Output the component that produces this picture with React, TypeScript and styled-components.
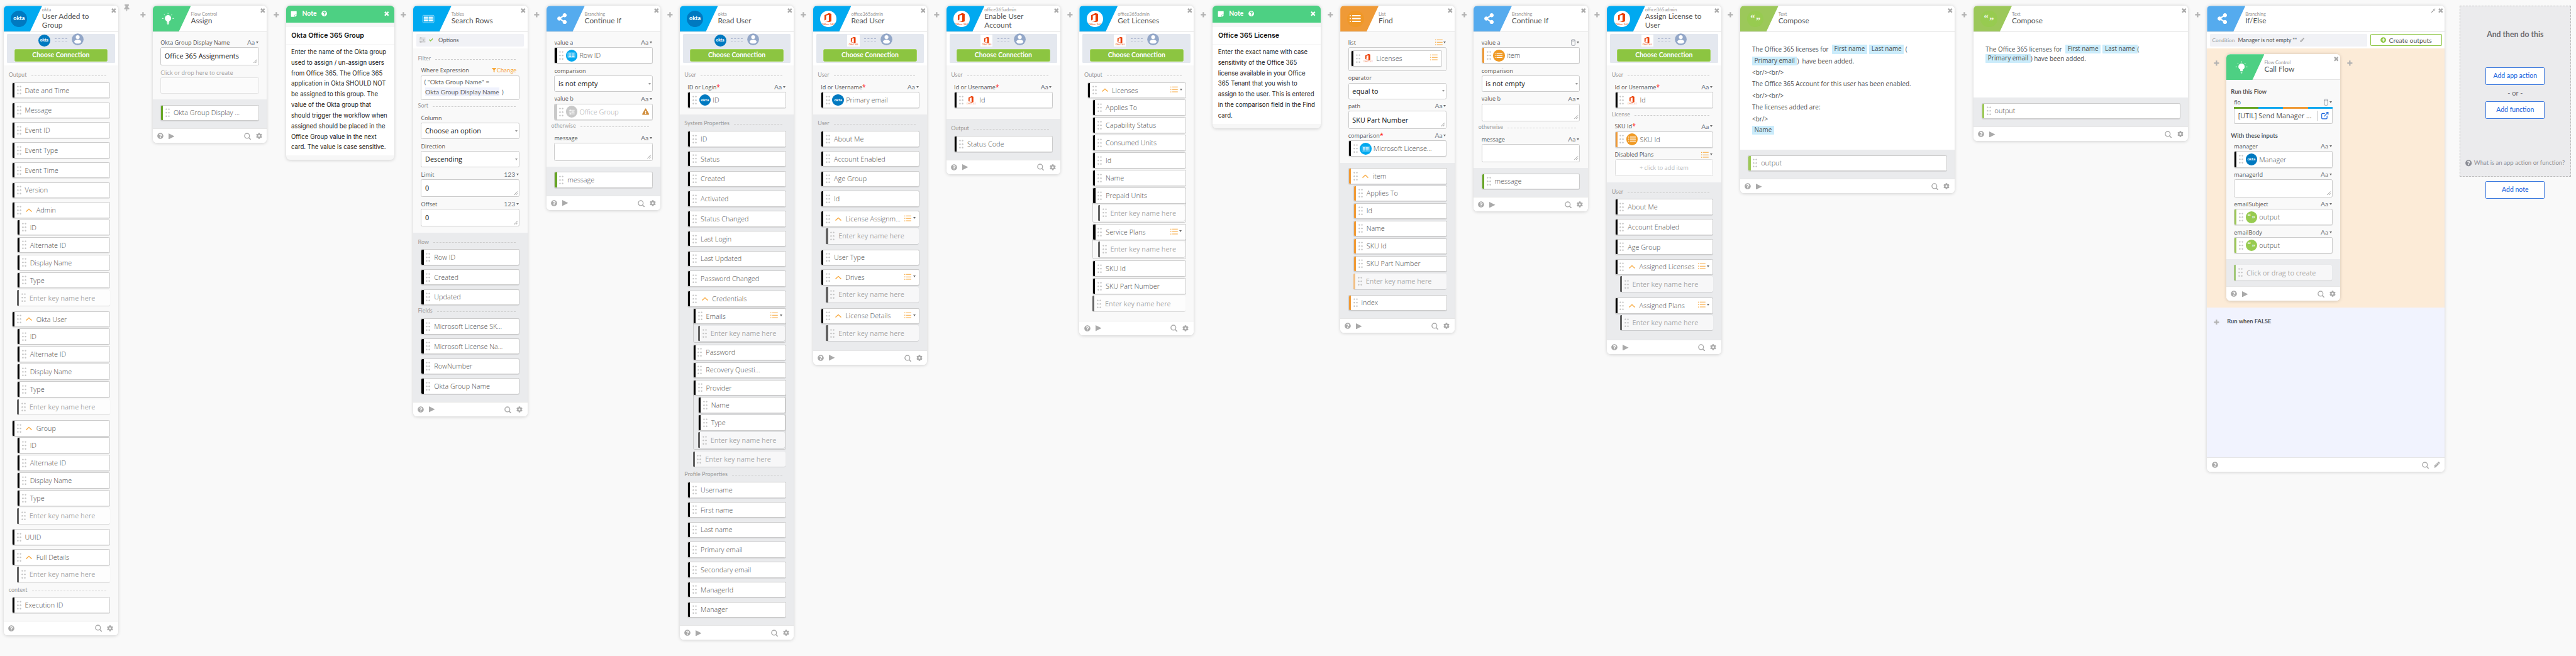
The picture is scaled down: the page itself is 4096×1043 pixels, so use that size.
import React from 'react';
import styled, { createGlobalStyle, css } from 'styled-components';
import {
  FaQuestionCircle,
  FaCog,
  FaPencilAlt,
  FaShareAlt,
  FaThumbtack,
  FaCheck,
  FaFilter,
  FaExclamationTriangle,
  FaPlusCircle,
  FaCompressAlt,
  FaStickyNote,
} from 'react-icons/fa';
import { FiExternalLink } from 'react-icons/fi';

const ui = `Lato, "Open Sans", sans-serif`;
const body = `"Open Sans", "Noto Sans", sans-serif`;

const colors = {
  page: '#f9f9f9',
  panel: '#eaebed',
  text: '#5a5a5a',
  label: '#555',
  faint: '#9a9a9a',
  icon: '#a9a9a9',
  line: '#cbcbcb',
  orange: '#f8a83c',
};

const Global = createGlobalStyle`
  *, *::before, *::after { box-sizing: border-box; }
  body { margin: 0; background: ${colors.page}; overflow: hidden; }
`;

/* ---------- board ---------- */

const Board = styled.main`
  zoom: 0.79673;
  width: 5141px;
  height: 1309px;
  overflow: hidden;
  display: flex;
  align-items: flex-start;
  padding: 11.8px 0 0 7.6px;
  background: ${colors.page};
  font-family: ${ui};
  color: ${colors.text};
`;

const Connector = styled.div<{ $width?: number }>`
  flex: none;
  width: ${(p) => p.$width ?? 38}px;
  padding-top: 12.2px;
  display: flex;
  justify-content: center;
  color: #b3b3b3;
`;

const PinConnector = styled.div`
  flex: none;
  width: 69px;
  display: flex;
  align-items: flex-start;
  gap: 20px;
  padding: 12.2px 0 0 10px;
  color: #b3b3b3;
`;

const PinSlot = styled.span`
  display: flex;
  margin: -15.6px 0 0 1px;
`;

/* ---------- card shell ---------- */

const CardBox = styled.section<{ $width?: number }>`
  flex: none;
  width: ${(p) => p.$width ?? 228}px;
  display: flex;
  flex-direction: column;
  border-radius: 8px;
  background: #fff;
  box-shadow: 0 1px 7px rgba(0, 0, 0, 0.17);
  overflow: hidden;
`;

const HeaderBar = styled.header`
  height: 51.6px;
  display: flex;
  background: #fff;
  border-bottom: 1px solid #e4e4e4;
`;

const Emblem = styled.div<{ $color: string }>`
  flex: none;
  width: 76.3px;
  height: 51px;
  padding-left: 14px;
  display: flex;
  align-items: center;
  background: ${(p) => p.$color};
  clip-path: polygon(0 0, 100% 0, 68.8% 100%, 0 100%);
`;

const HeaderText = styled.div`
  flex: 1;
  display: flex;
  flex-direction: column;
  justify-content: center;
`;

const Provider = styled.span`
  font-size: 9.3px;
  line-height: 9.4px;
  color: #959595;
`;

const Title = styled.h2`
  margin: 0;
  font-size: 14.9px;
  line-height: 17.4px;
  font-weight: 400;
  color: #555;
  white-space: pre-line;
`;

const HeaderTools = styled.div`
  display: flex;
  gap: 5px;
  padding: 5px 3.6px 0 0;
  color: ${colors.icon};
`;

const FooterBar = styled.footer`
  height: 28.8px;
  display: flex;
  align-items: center;
  gap: 10px;
  padding: 0 9.6px 0 9px;
  border-top: 1px solid #e6e6e6;
  background: #fff;
  color: ${colors.icon};
`;

const Spacer = styled.span`
  flex: 1;
`;

/* ---------- connection strip ---------- */

const ConnectionStrip = styled.div`
  height: 66.7px;
  padding: 4.3px 6.3px 0;
  background: #fff;
`;

const ConnectionPanel = styled.div`
  height: 58px;
  display: flex;
  flex-direction: column;
  align-items: center;
  background: #e4e8ef;
  border-radius: 2px;
`;

const ConnectionIcons = styled.div`
  height: 30.8px;
  display: flex;
  align-items: flex-start;
  justify-content: center;
  gap: 9px;
  padding-top: 1px;
`;

const Dashes = styled.span`
  width: 24.5px;
  height: 7px;
  margin-top: 8px;
  border-top: 1px dashed #a4afcb;
  border-bottom: 1px dashed #b9c0d0;
`;

const PersonSlot = styled.span`
  display: flex;
  margin-top: -2px;
`;

const ChooseButton = styled.button`
  width: 186.6px;
  height: 25px;
  padding: 0 0 2px;
  border: 1px solid #a4d25f;
  border-radius: 3px;
  background: #8cc541;
  color: #fff;
  font: 700 13.1px/20px ${ui};
`;

const OptionsStrip = styled.div`
  height: 33.6px;
  padding: 4px 6.6px 0;
  background: #fff;
`;

const OptionsPanel = styled.div`
  height: 25.5px;
  display: flex;
  align-items: center;
  padding-left: 5.4px;
  background: #f1f2f6;
  border-radius: 2px;
  font-size: 11.6px;
  color: #666;
`;

const CheckSlot = styled.span`
  display: flex;
  margin: 0 11px 0 5px;
  color: #7cbf2e;
`;

/* ---------- sections ---------- */

const Inputs = styled.div<{ $extra?: number }>`
  display: flex;
  flex-direction: column;
  padding: 11.7px 15.6px ${(p) => 7.6 + (p.$extra ?? 0)}px 15.8px;
  background: ${colors.page};
`;

const Outputs = styled.div<{ $light?: boolean; $titled?: boolean }>`
  padding: ${(p) => (p.$light ? 15.8 : p.$titled ? 15 : 10.6)}px 15.4px 7.6px 15.8px;
  background: ${(p) => (p.$light ? colors.page : colors.panel)};
`;

const SectionTitle = styled.div<{ $spaced?: boolean }>`
  height: 18.4px;
  margin: ${(p) => (p.$spaced ? 3.9 : 0)}px 8px 0 -6.2px;
  display: flex;
  align-items: flex-start;
  gap: 9px;
  font-size: 11.3px;
  line-height: 7.2px;
  color: ${colors.faint};
  &::after {
    content: '';
    flex: 1;
    margin-top: 5px;
    border-top: 1px dashed #cdcdcd;
  }
`;

const Heading = styled.h3<{ $gap: number }>`
  height: 22.2px;
  margin: ${(p) => p.$gap}px 0 0 -6.2px;
  font: 700 11.8px/22px ${ui};
  color: #555;
`;

/* ---------- form fields ---------- */

const FieldBox = styled.div`
  margin-bottom: 4.1px;
`;

const FieldLabel = styled.div`
  height: 19.3px;
  display: flex;
  align-items: center;
  justify-content: space-between;
  font: 400 11.4px/19px ${body};
  color: ${colors.label};
`;

const Required = styled.span`
  color: #f00;
  font-size: 13px;
`;

const TypeTag = styled.span`
  display: flex;
  align-items: center;
  gap: 2px;
  padding-right: 1.6px;
  font: 400 13px/16px ${ui};
  color: #707782;
`;

const DownCaret = styled.span`
  border: 3.2px solid transparent;
  border-top: 4px solid #6b6b6b;
  border-bottom: 0;
`;

const ChangeLink = styled.span`
  display: flex;
  align-items: center;
  gap: 1px;
  padding-right: 6px;
  font: 400 12px/16px ${ui};
  color: ${colors.orange};
`;

const boxed = css`
  border: 1px solid ${colors.line};
  border-radius: 3px;
  background: #fff;
`;

const SelectBox = styled.div`
  ${boxed}
  height: 32.8px;
  padding: 0 3px 0 7px;
  display: flex;
  align-items: center;
  justify-content: space-between;
  font: 400 13.6px/20px ${body};
  color: #111;
`;

const SelectArrow = styled.span`
  border: 3px solid transparent;
  border-top: 5px solid #999;
  border-bottom: 0;
`;

const AreaBox = styled.div`
  ${boxed}
  height: 35.6px;
  padding: 0 2px 0 7px;
  display: flex;
  align-items: center;
  justify-content: space-between;
  font: 400 13.6px/20px ${body};
  color: #111;
`;

const GripSlot = styled.span`
  align-self: flex-end;
  display: flex;
  padding-bottom: 3px;
`;

const GhostBox = styled.div`
  height: 32.4px;
  border: 1px solid #e4e4e4;
  border-radius: 3px;
  background: #fbfbfb;
`;

const GhostLabel = styled(FieldLabel)`
  padding-top: 2px;
  height: 20.3px;
  color: #a3a3a3;
`;

const AddItemBox = styled.div`
  height: 34px;
  display: flex;
  align-items: center;
  justify-content: center;
  border: 1px solid #dcdcdc;
  border-radius: 3px;
  background: #fff;
  font: 400 11.6px/16px ${body};
  color: #bdbdbd;
`;

const ListFrame = styled.div`
  height: 47.4px;
  padding: 4.3px 8.6px 0 4.2px;
  border: 1px solid ${colors.line};
  border-radius: 3px;
  background: #fafafa;
`;

const Expression = styled.div`
  ${boxed}
  height: 49.3px;
  padding: 3.5px 5px 0;
  font: 400 12.9px/19.6px ${ui};
  color: #666;
`;

const ExpressionToken = styled.span`
  margin: 0 2px;
  padding: 1px 0;
  background: #f0f2fd;
`;

/* ---------- pills ---------- */

type Tone = 'black' | 'green' | 'orange' | 'lime' | 'muted';
const toneColor: Record<Tone, string> = {
  black: '#000',
  green: '#67a625',
  orange: '#ef9a37',
  lime: '#9cc955',
  muted: '#c9c9c9',
};

const PillBox = styled.div<{ $tone: Tone; $ghost?: boolean; $field?: boolean }>`
  height: ${(p) => (p.$field ? 32.8 : 32)}px;
  display: flex;
  align-items: center;
  padding-right: 6.5px;
  border-radius: 3px;
  font: 300 13.6px/20px ${body};
  color: ${(p) => (p.$tone === 'muted' ? '#aaa' : '#4d4d4d')};
  ${(p) =>
    p.$ghost
      ? css`
          height: 31px;
          margin: 0.5px 1px 0.5px 0;
          background: rgba(255, 255, 255, 0.6);
          box-shadow: 0 1px 1px rgba(0, 0, 0, 0.14);
          font-weight: 400;
          color: #a9a9a9;
        `
      : css`
          border: 1px solid ${colors.line};
          background: #fff;
          box-shadow: 0 1px 1px rgba(0, 0, 0, 0.1);
        `}
  &::before {
    content: '';
    align-self: stretch;
    width: 4px;
    margin-right: 4.7px;
    border-radius: 2px 0 0 2px;
    background: ${(p) => toneColor[p.$tone]};
    opacity: ${(p) => (p.$ghost ? 0.6 : 1)};
  }
`;

const PillText = styled.span<{ $after?: 'caret' | 'badge' }>`
  flex: 1;
  margin-left: ${(p) => (p.$after === 'caret' ? 8.2 : p.$after === 'badge' ? 4 : 7.2)}px;
  white-space: nowrap;
`;

const CaretSlot = styled.span`
  display: flex;
  margin-left: 9.4px;
`;

const BadgeSlot = styled.span`
  display: flex;
  margin-left: 4px;
`;

const ListTag = styled.span`
  display: flex;
  align-items: center;
  gap: 3px;
  margin-top: -3px;
`;

const PillSlot = styled.div<{ $gap?: number }>`
  margin-bottom: ${(p) => p.$gap ?? 7.9}px;
`;

const Tree = styled.div<{ $framed?: boolean }>`
  ${(p) =>
    p.$framed
      ? css`
          border: 1px solid ${colors.line};
          border-radius: 3px;
          & > ${PillBox} {
            margin: -1px -1px 0;
          }
        `
      : css`
          margin-bottom: 10.7px;
        `}
`;

const Children = styled.div<{ $framed?: boolean }>`
  display: flex;
  flex-direction: column;
  gap: 3.15px;
  padding: 2.4px 0 ${(p) => (p.$framed ? 1.7 : 0)}px ${(p) => (p.$framed ? 9.3 : 10.3)}px;
`;

/* ---------- badges ---------- */

const OktaDisc = styled.span<{ $size: number }>`
  flex: none;
  width: ${(p) => p.$size}px;
  height: ${(p) => p.$size}px;
  display: flex;
  align-items: center;
  justify-content: center;
  padding-bottom: ${(p) => p.$size * 0.04}px;
  border-radius: 50%;
  background: #0079c0;
  color: #fff;
  font: 900 ${(p) => p.$size * 0.34}px/1 ${ui};
`;

const Disc = styled.span<{ $size: number; $color: string }>`
  flex: none;
  width: ${(p) => p.$size}px;
  height: ${(p) => p.$size}px;
  display: flex;
  align-items: center;
  justify-content: center;
  border-radius: 50%;
  background: ${(p) => p.$color};
  overflow: hidden;
`;

const OfficeTile = styled.span`
  display: flex;
  align-items: center;
  justify-content: center;
  width: 24px;
  height: 24px;
  margin-top: 0.6px;
  background: #fff;
`;

const OfficeArt = ({ size }: { size: number }) => (
  <svg width={size} height={size} viewBox="0 0 34 34">
    <path fill="#eb3c00" d="M9 9.500 18 5l5.200 1.700v15.600L18 24 9 20.800l9 1.100V8.900l-5.600 1.500v8.200L9 20.300z" />
    <text x="17" y="30" textAnchor="middle" fontSize="5.900" fontFamily="Lato, sans-serif" fill="#eb3c00">
      Office 365
    </text>
  </svg>
);

const PersonArt = () => (
  <svg width="24" height="24" viewBox="0 0 24 24">
    <circle cx="12" cy="12" r="11.800" fill="#93a7c8" />
    <circle cx="12" cy="7.600" r="3.900" fill="#fff" />
    <ellipse cx="12" cy="16.600" rx="6.800" ry="3.900" fill="#fff" />
  </svg>
);

const BulbArt = () => (
  <svg width="33" height="33" viewBox="0 0 33 33" fill="none" stroke="#fff" strokeWidth="1.200">
    <circle cx="16.500" cy="15" r="6.300" fill="#fff" stroke="none" />
    <path d="M14 20h5v4h-5z" fill="#fff" stroke="none" />
    <path d="M14.300 25.600h4.400M15.200 27.600h2.600M16.500 4.500v2.300M8.500 7.500l1.600 1.700M24.500 7.500l-1.600 1.700M4.800 15.500h2.600M25.600 15.500h2.600" />
  </svg>
);

const TableArt = ({ size }: { size: number }) => (
  <svg width={size} height={size} viewBox="0 0 34 34">
    <rect x="5.500" y="9.500" width="23" height="15" rx="1.500" fill="none" stroke="#9adcf8" strokeWidth="1.200" />
    <path
      fill="#fff"
      d="M7.500 12.200h9v2.600h-9zM17.500 12.200h9v2.600h-9zM7.500 15.800h9v2.600h-9zM17.500 15.800h9v2.600h-9zM7.500 19.400h9V22h-9zM17.500 19.400h9V22h-9z"
    />
  </svg>
);

const ListArt = ({ width, color }: { width: number; color: string }) => (
  <svg width={width} height={(width * 13) / 15} viewBox="0 0 15 13" fill={color}>
    <path d="M0 .8h1.800v1.600H0zM0 5.700h1.800v1.600H0zM0 10.600h1.800v1.600H0zM3.600 1h11.200v1.200H3.600zM3.600 5.900h11.200v1.200H3.600zM3.600 10.800h11.200V12H3.600z" />
  </svg>
);

const BoldListArt = ({ size }: { size: number }) => (
  <svg width={size} height={size} viewBox="0 0 24 24" stroke="#fff" strokeWidth="1.700" strokeLinecap="round">
    <path d="M4.500 7.800h.1M8 7.800h11M4.500 12h.1M8 12h11M4.500 16.200h.1M8 16.200h11" />
  </svg>
);

const SlidersArt = ({ size, color }: { size: number; color: string }) => (
  <svg width={size} height={size} viewBox="0 0 16 16" stroke={color} strokeWidth="1.300" fill={color}>
    <path d="M1 3.500h14M1 8h14M1 12.500h14" />
    <path strokeWidth="2.600" d="M4.600 2.200v2.600M10.800 6.700v2.600M4.600 11.200v2.600" />
  </svg>
);

const QuoteMark = styled.span<{ $size: number; $low?: boolean }>`
  font: 700 ${(p) => p.$size}px/1 "Liberation Serif", serif;
  color: #fff;
  opacity: 0.9;
  margin-top: ${(p) => (p.$low ? p.$size * 0.55 : p.$size * 0.2)}px;
`;

const QuoteRow = styled.span`
  display: flex;
  align-items: flex-start;
  justify-content: center;
  gap: 2px;
`;

const Quotes = ({ size }: { size: number }) => (
  <QuoteRow>
    <QuoteMark $size={size}>“</QuoteMark>
    <QuoteMark $size={size} $low>
      ”
    </QuoteMark>
  </QuoteRow>
);

const CrossArt = ({ size }: { size: number }) => (
  <svg width={size} height={size} viewBox="0 0 10 10" stroke="currentColor" strokeWidth="3.100">
    <path d="M1.200 1.200l7.600 7.600M8.800 1.200 1.200 8.800" />
  </svg>
);

const PlusArt = () => (
  <svg width="11" height="11" viewBox="0 0 11 11" fill="currentColor">
    <path d="M4.100.4h2.800v3.700h3.700v2.800H6.900v3.700H4.100V6.900H.4V4.100h3.700z" />
  </svg>
);

const SearchArt = () => (
  <svg width="14" height="14" viewBox="0 0 14 14" fill="none" stroke="currentColor">
    <circle cx="6" cy="6.200" r="4.900" strokeWidth="1.700" />
    <path d="m9.700 10 3.300 3.300" strokeWidth="2" strokeLinecap="round" />
  </svg>
);

const PlayArt = () => (
  <svg width="12" height="12" viewBox="0 0 12 12" fill="currentColor">
    <path d="M0 0l12 6-12 6z" />
  </svg>
);

const UpArt = () => (
  <svg width="12.500" height="8" viewBox="0 0 12.500 8" fill="none" stroke={colors.orange} strokeWidth="1.700">
    <path d="M.6 7 6.250 1.700 11.900 7" />
  </svg>
);

const DotsArt = () => (
  <svg width="9" height="18" viewBox="0 0 9 18" fill="#c4c4c4">
    {[2, 9, 16].map((y) => (
      <React.Fragment key={y}>
        <circle cx="1.800" cy={y} r="1.500" />
        <circle cx="7" cy={y} r="1.500" />
      </React.Fragment>
    ))}
  </svg>
);

const GripArt = () => (
  <svg width="8" height="8" viewBox="0 0 8 8" stroke="#666" strokeWidth=".9">
    <path d="M.5 7.500l7-7M4.200 7.500l3.300-3.300" />
  </svg>
);

const CylinderArt = () => (
  <svg width="9" height="14" viewBox="0 0 9 14" fill="none" stroke="#8a8f99" strokeWidth="1.100">
    <path d="M1 2.500v9c0 1 1.500 1.600 3.500 1.600S8 12.500 8 11.500v-9M1 2.500C1 1.500 2.500 1 4.500 1S8 1.500 8 2.500 6.500 4 4.500 4 1 3.500 1 2.500z" />
  </svg>
);

/* ---------- composed pieces ---------- */

type BadgeKind = 'okta' | 'office' | 'table' | 'list' | 'quote' | 'sliders';

const Badge = ({ kind }: { kind: BadgeKind }) => {
  switch (kind) {
    case 'okta':
      return <OktaDisc $size={23.4}>okta</OktaDisc>;
    case 'office':
      return <OfficeArt size={23.4} />;
    case 'table':
      return (
        <Disc $size={23.4} $color="#00a9ef">
          <TableArt size={22} />
        </Disc>
      );
    case 'list':
      return (
        <Disc $size={23.4} $color="#f09a25">
          <BoldListArt size={23} />
        </Disc>
      );
    case 'quote':
      return (
        <Disc $size={23.4} $color="#97cb50">
          <Quotes size={13} />
        </Disc>
      );
    default:
      return (
        <Disc $size={23.4} $color="#c8c8c8">
          <SlidersArt size={13} color="#fff" />
        </Disc>
      );
  }
};

type PillProps = {
  text: string;
  tone?: Tone;
  ghost?: boolean;
  field?: boolean;
  open?: boolean;
  badge?: BadgeKind;
  list?: 'menu' | 'plain';
  warn?: boolean;
};

const Pill = ({ text, tone = 'black', ghost, field, open, badge, list, warn }: PillProps) => (
  <PillBox $tone={tone} $ghost={ghost} $field={field}>
    <DotsArt />
    {open && (
      <CaretSlot>
        <UpArt />
      </CaretSlot>
    )}
    {badge && (
      <BadgeSlot>
        <Badge kind={badge} />
      </BadgeSlot>
    )}
    <PillText $after={open ? 'caret' : badge ? 'badge' : undefined}>{text}</PillText>
    {list && (
      <ListTag>
        <ListArt width={15} color={colors.orange} />
        {list === 'menu' && <DownCaret />}
      </ListTag>
    )}
    {warn && <FaExclamationTriangle size={14} color="#cf8b38" />}
  </PillBox>
);

type Node = string | { text: string; list?: boolean; kids: Node[] };

const NodeTree = ({ node, tone, nested }: { node: Node; tone: Tone; nested?: boolean }) => {
  if (typeof node === 'string') {
    const pill = <Pill text={node} tone={tone} />;
    return nested ? pill : <PillSlot>{pill}</PillSlot>;
  }
  return (
    <Tree $framed={nested}>
      <Pill text={node.text} tone={tone} open={!nested} list={node.list ? 'menu' : undefined} />
      <Children $framed={nested}>
        {node.kids.map((kid, i) => (
          <NodeTree key={i} node={kid} tone={tone} nested />
        ))}
        <Pill text="Enter key name here" tone={tone} ghost />
      </Children>
    </Tree>
  );
};

const Nodes = ({ items, tone = 'black' }: { items: Node[]; tone?: Tone }) => (
  <>
    {items.map((n, i) => (
      <NodeTree key={i} node={n} tone={tone} />
    ))}
  </>
);

type TypeKind = 'Aa' | '123' | 'list' | 'object';

const Field = ({
  label,
  required,
  type,
  children,
}: {
  label: string;
  required?: boolean;
  type?: TypeKind;
  children: React.ReactNode;
}) => (
  <FieldBox>
    <FieldLabel>
      <span>
        {label}
        {required && <Required>*</Required>}
      </span>
      {type && (
        <TypeTag>
          {type === 'list' ? <ListArt width={15} color={colors.orange} /> : type === 'object' ? <CylinderArt /> : type}
          <DownCaret />
        </TypeTag>
      )}
    </FieldLabel>
    {children}
  </FieldBox>
);

const Select = ({ value }: { value: string }) => (
  <SelectBox>
    {value}
    <SelectArrow />
  </SelectBox>
);

const Area = ({ value }: { value?: string }) => (
  <AreaBox>
    <span>{value}</span>
    <GripSlot>
      <GripArt />
    </GripSlot>
  </AreaBox>
);

const Plus = ({ width }: { width?: number }) => (
  <Connector $width={width}>
    <PlusArt />
  </Connector>
);

type EmblemKind = 'okta' | 'office' | 'bulb' | 'table' | 'branch' | 'list' | 'quote';
const emblemColor: Record<EmblemKind, string> = {
  okta: '#00a9f0',
  office: '#00a9f0',
  bulb: '#4dd083',
  table: '#00a9f0',
  branch: '#55abee',
  list: '#ef9a37',
  quote: '#9cc85a',
};

const EmblemArt = ({ kind }: { kind: EmblemKind }) => {
  switch (kind) {
    case 'okta':
      return <OktaDisc $size={33}>okta</OktaDisc>;
    case 'office':
      return (
        <Disc $size={33} $color="#fff">
          <OfficeArt size={35} />
        </Disc>
      );
    case 'bulb':
      return <BulbArt />;
    case 'table':
      return <TableArt size={33} />;
    case 'branch':
      return (
        <Disc $size={33} $color="transparent">
          <FaShareAlt size={21.5} color="#fff" />
        </Disc>
      );
    case 'list':
      return (
        <Disc $size={33} $color="#f09827">
          <BoldListArt size={34} />
        </Disc>
      );
    default:
      return (
        <Disc $size={33} $color="#97cb50">
          <Quotes size={18} />
        </Disc>
      );
  }
};

type CardProps = {
  emblem: EmblemKind;
  provider: string;
  title: string;
  width?: number;
  connection?: 'okta' | 'office';
  play?: boolean;
  branch?: boolean;
  children: React.ReactNode;
};

const Card = ({ emblem, provider, title, width, connection, play = true, branch, children }: CardProps) => (
  <CardBox $width={width}>
    <HeaderBar>
      <Emblem $color={emblemColor[emblem]}>
        <EmblemArt kind={emblem} />
      </Emblem>
      <HeaderText>
        <Provider>{provider}</Provider>
        <Title>{title}</Title>
      </HeaderText>
      <HeaderTools>
        {branch && <FaCompressAlt size={10} />}
        <CrossArt size={9.6} />
      </HeaderTools>
    </HeaderBar>
    {connection && (
      <ConnectionStrip>
        <ConnectionPanel>
          <ConnectionIcons>
            {connection === 'okta' ? (
              <OktaDisc $size={24}>okta</OktaDisc>
            ) : (
              <OfficeTile>
                <OfficeArt size={23} />
              </OfficeTile>
            )}
            <Dashes />
            <PersonSlot>
              <PersonArt />
            </PersonSlot>
          </ConnectionIcons>
          <ChooseButton>Choose Connection</ChooseButton>
        </ConnectionPanel>
      </ConnectionStrip>
    )}
    {children}
    <FooterBar>
      <FaQuestionCircle size={12.5} />
      {play && <PlayArt />}
      <Spacer />
      <SearchArt />
      {branch ? <FaPencilAlt size={12} /> : <FaCog size={12.5} />}
    </FooterBar>
  </CardBox>
);

/* ---------- notes ---------- */

const NoteBox = styled(CardBox)`
  background: #f7f7f7;
`;

const NoteHeader = styled.header`
  height: 33px;
  display: flex;
  align-items: center;
  padding: 0 10.5px 2px 9.6px;
  background: #4dd083;
  color: #fff;
  font: 700 13px/16px ${ui};
`;

const NoteTitle = styled.span`
  margin: 0 10px 0 10px;
`;

const NoteHeading = styled.h3`
  height: 34.6px;
  margin: 9.3px 0 0;
  padding: 0 11px;
  background: #fff;
  border-bottom: 1px solid #f6f6f6;
  font: 600 13.4px/34px Inter, sans-serif;
  color: #111;
`;

const NoteText = styled.p`
  margin: 0 0 8.8px;
  padding: 5.3px 0 5px 10.5px;
  background: #fff;
  font: 400 12.1px/21.15px Inter, sans-serif;
  color: #1c1c1c;
  white-space: pre-line;
`;

const Note = ({ heading, text }: { heading: string; text: string }) => (
  <NoteBox $width={216}>
    <NoteHeader>
      <FaStickyNote size={13} />
      <NoteTitle>Note</NoteTitle>
      <FaQuestionCircle size={11.5} />
      <Spacer />
      <CrossArt size={9.6} />
    </NoteHeader>
    <NoteHeading>{heading}</NoteHeading>
    <NoteText>{text}</NoteText>
  </NoteBox>
);

/* ---------- compose ---------- */

const ComposeText = styled.div<{ $height: number; $top: number }>`
  height: ${(p) => p.$height}px;
  padding: ${(p) => p.$top}px 24px 0;
  background: #fff;
`;

const ComposeLine = styled.div<{ $tight?: boolean }>`
  height: ${(p) => (p.$tight ? 19 : 23.1)}px;
  display: flex;
  align-items: center;
  font: 400 12.5px/17px ${body};
  color: #4f4f4f;
  white-space: pre;
`;

const Chip = styled.span`
  height: 18px;
  padding: 0 4.5px;
  margin-top: -1.5px;
  border-radius: 1px;
  background: #cbecfb;
  & + & {
    margin-left: 4px;
  }
`;

/* ---------- branching ---------- */

const ConditionRow = styled.div`
  height: 33.4px;
  display: flex;
  align-items: center;
  gap: 6.2px;
  padding: 0 5.6px;
  background: #fff;
`;

const Condition = styled.div`
  flex: 1;
  height: 25px;
  display: flex;
  align-items: center;
  gap: 6.5px;
  padding-left: 4.6px;
  background: #f1f2f6;
  border-radius: 2px;
  font-size: 11.2px;
  color: #555;
`;

const ConditionLabel = styled.span`
  font-size: 10.4px;
  color: ${colors.faint};
`;

const CreateOutputs = styled.button`
  width: 142.6px;
  height: 23.6px;
  display: flex;
  align-items: center;
  justify-content: center;
  gap: 5px;
  border: 1px solid #8cc541;
  border-radius: 2px;
  background: #fff;
  font: 400 13.1px/18px ${ui};
  color: #555;
`;

const TrueLane = styled.div`
  height: 516.5px;
  display: flex;
  align-items: flex-start;
  padding-top: 11.6px;
  background: #fcebd7;
`;

const FalseLane = styled.div`
  height: 299.4px;
  display: flex;
  align-items: flex-start;
  padding-top: 11.6px;
  background: #f1f3fe;
`;

const LaneTitle = styled.h3`
  margin: 6px 0 0 2px;
  font: 700 11.7px/20px ${ui};
  color: #555;
`;

const FlowLink = styled.div`
  height: 32.8px;
  display: flex;
  flex-direction: column;
`;

const FlowStripes = styled.div`
  height: 2.6px;
  background: linear-gradient(90deg, #67a625 25%, #12a8ef 25% 50%, #ef9a37 50% 75%, #12a8ef 75%);
`;

const FlowName = styled.div`
  ${boxed}
  flex: 1;
  display: flex;
  align-items: center;
  padding: 0 6px 0 7px;
  border-top: 0;
  border-radius: 0 0 3px 3px;
  font: 400 13.6px/20px ${body};
  color: #4d4d4d;
  white-space: nowrap;
`;

const FlowOpen = styled.span`
  display: flex;
  align-items: center;
  height: 20px;
  margin-left: auto;
  padding-left: 4px;
  border-left: 1px solid #bbb;
  color: #1662dd;
`;

/* ---------- add step ---------- */

const AddColumn = styled.aside`
  flex: none;
  width: 222.6px;
  margin-left: 29.2px;
  display: flex;
  flex-direction: column;
  align-items: center;
  gap: 8.4px;
`;

const DropZone = styled.div`
  width: 100%;
  height: 341px;
  display: flex;
  flex-direction: column;
  align-items: center;
  padding-top: 46px;
  border: 1.6px dashed #b9b9b9;
  background: #ebebed;
`;

const DropTitle = styled.h3`
  margin: 0 0 55.5px;
  font: 700 15.4px/20px ${ui};
  color: #6b6c72;
`;

const BlueButton = styled.button`
  width: 118.4px;
  height: 35px;
  padding: 0;
  border: 1px solid #3a78de;
  border-radius: 2px;
  background: #fff;
  font: 400 13.2px/20px ${ui};
  color: #1662dd;
`;

const Or = styled.span`
  height: 33.2px;
  font: 400 14px/32px ${ui};
  color: #6b6c72;
`;

const HelpLine = styled.span`
  display: flex;
  align-items: center;
  gap: 4px;
  margin-top: 79px;
  font: 400 12.05px/18px ${ui};
  color: #8c8e96;
  white-space: nowrap;
`;

const person: Node[] = ['ID', 'Alternate ID', 'Display Name', 'Type'];

export default function App() {
  return (
    <>
      <Global />
      <Board>
        <Card emblem="okta" provider="okta" title={'User Added to\nGroup'} connection="okta" play={false}>
          <Outputs $light>
            <SectionTitle>Output</SectionTitle>
            <Nodes
              items={[
                'Date and Time',
                'Message',
                'Event ID',
                'Event Type',
                'Event Time',
                'Version',
                { text: 'Admin', kids: person },
                { text: 'Okta User', kids: person },
                { text: 'Group', kids: person },
                'UUID',
                { text: 'Full Details', kids: [] },
              ]}
            />
            <SectionTitle>context</SectionTitle>
            <Nodes items={['Execution ID']} />
          </Outputs>
        </Card>
        <PinConnector>
          <PinSlot>
            <FaThumbtack size={14} />
          </PinSlot>
          <PlusArt />
        </PinConnector>

        <Card emblem="bulb" provider="Flow Control" title="Assign">
          <Inputs>
            <Field label="Okta Group Display Name" type="Aa">
              <Area value="Office 365 Assignments" />
            </Field>
            <GhostLabel>Click or drop here to create</GhostLabel>
            <FieldBox>
              <GhostBox />
            </FieldBox>
          </Inputs>
          <Outputs>
            <Nodes tone="green" items={['Okta Group Display ...']} />
          </Outputs>
        </Card>
        <Plus />

        <Note
          heading="Okta Office 365 Group"
          text={
            'Enter the name of the Okta group\nused to assign / un-assign users\nfrom Office 365. The Office 365\napplication in Okta SHOULD NOT\nbe assigned to this group. The\nvalue of the Okta group that\nshould trigger the workflow when\nassigned should be placed in the\nOffice Group value in the next\ncard. The value is case sensitive.'
          }
        />
        <Plus />

        <Card emblem="table" provider="Tables" title="Search Rows">
          <OptionsStrip>
            <OptionsPanel>
              <SlidersArt size={14} color="#999" />
              <CheckSlot>
                <FaCheck size={8.5} />
              </CheckSlot>
              Options
            </OptionsPanel>
          </OptionsStrip>
          <Inputs>
            <SectionTitle $spaced>Filter</SectionTitle>
            <FieldBox>
              <FieldLabel>
                <span>Where Expression</span>
                <ChangeLink>
                  <FaFilter size={9} />
                  Change
                </ChangeLink>
              </FieldLabel>
              <Expression>
                ( "Okta Group Name" =<br />
                <ExpressionToken>Okta Group Display Name</ExpressionToken> )
              </Expression>
            </FieldBox>
            <SectionTitle $spaced>Sort</SectionTitle>
            <Field label="Column">
              <Select value="Choose an option" />
            </Field>
            <Field label="Direction">
              <Select value="Descending" />
            </Field>
            <Field label="Limit" type="123">
              <Area value="0" />
            </Field>
            <Field label="Offset" type="123">
              <Area value="0" />
            </Field>
          </Inputs>
          <Outputs $titled>
            <SectionTitle>Row</SectionTitle>
            <Nodes items={['Row ID', 'Created', 'Updated']} />
            <SectionTitle>Fields</SectionTitle>
            <Nodes items={['Microsoft License SK...', 'Microsoft License Na...', 'RowNumber', 'Okta Group Name']} />
          </Outputs>
        </Card>
        <Plus />

        <Card emblem="branch" provider="Branching" title="Continue If">
          <Inputs>
            <Field label="value a" type="Aa">
              <Pill field badge="table" text="Row ID" />
            </Field>
            <Field label="comparison">
              <Select value="is not empty" />
            </Field>
            <Field label="value b" type="Aa">
              <Pill field badge="sliders" tone="muted" text="Office Group" warn />
            </Field>
            <SectionTitle $spaced>otherwise</SectionTitle>
            <Field label="message" type="Aa">
              <Area />
            </Field>
          </Inputs>
          <Outputs>
            <Nodes tone="green" items={['message']} />
          </Outputs>
        </Card>
        <Plus />

        <Card emblem="okta" provider="okta" title="Read User" connection="okta">
          <Inputs>
            <SectionTitle $spaced>User</SectionTitle>
            <Field label="ID or Login" required type="Aa">
              <Pill field badge="okta" text="ID" />
            </Field>
          </Inputs>
          <Outputs $titled>
            <SectionTitle>System Properties</SectionTitle>
            <Nodes
              items={[
                'ID',
                'Status',
                'Created',
                'Activated',
                'Status Changed',
                'Last Login',
                'Last Updated',
                'Password Changed',
                {
                  text: 'Credentials',
                  kids: [
                    { text: 'Emails', list: true, kids: [] },
                    'Password',
                    'Recovery Questi...',
                    { text: 'Provider', kids: ['Name', 'Type'] },
                  ],
                },
              ]}
            />
            <SectionTitle>Profile Properties</SectionTitle>
            <Nodes
              items={['Username', 'First name', 'Last name', 'Primary email', 'Secondary email', 'ManagerId', 'Manager']}
            />
          </Outputs>
        </Card>
        <Plus />

        <Card emblem="office" provider="office365admin" title="Read User" connection="office">
          <Inputs>
            <SectionTitle $spaced>User</SectionTitle>
            <Field label="Id or Username" required type="Aa">
              <Pill field badge="okta" text="Primary email" />
            </Field>
          </Inputs>
          <Outputs $titled>
            <SectionTitle>User</SectionTitle>
            <Nodes
              items={[
                'About Me',
                'Account Enabled',
                'Age Group',
                'Id',
                { text: 'License Assignm...', list: true, kids: [] },
                'User Type',
                { text: 'Drives', list: true, kids: [] },
                { text: 'License Details', list: true, kids: [] },
              ]}
            />
          </Outputs>
        </Card>
        <Plus />

        <Card emblem="office" provider="office365admin" title={'Enable User\nAccount'} connection="office">
          <Inputs $extra={10}>
            <SectionTitle $spaced>User</SectionTitle>
            <Field label="Id or Username" required type="Aa">
              <Pill field badge="office" text="Id" />
            </Field>
          </Inputs>
          <Outputs $titled>
            <SectionTitle>Output</SectionTitle>
            <Nodes items={['Status Code']} />
          </Outputs>
        </Card>
        <Plus />

        <Card emblem="office" provider="office365admin" title="Get Licenses" connection="office">
          <Outputs $light>
            <SectionTitle>Output</SectionTitle>
            <Nodes
              items={[
                {
                  text: 'Licenses',
                  list: true,
                  kids: [
                    'Applies To',
                    'Capability Status',
                    'Consumed Units',
                    'Id',
                    'Name',
                    { text: 'Prepaid Units', kids: [] },
                    { text: 'Service Plans', list: true, kids: [] },
                    'SKU Id',
                    'SKU Part Number',
                  ],
                },
              ]}
            />
          </Outputs>
        </Card>
        <Plus />

        <Note
          heading="Office 365 License"
          text={
            'Enter the exact name with case\nsensitivity of the Office 365\nlicense available in your Office\n365 Tenant that you wish to\nassign to the user. This is entered\nin the comparison field in the Find\ncard.'
          }
        />
        <Plus width={38.6} />

        <Card emblem="list" provider="List" title="Find">
          <Inputs>
            <Field label="list" type="list">
              <ListFrame>
                <Pill field badge="office" text="Licenses" list="plain" />
              </ListFrame>
            </Field>
            <Field label="operator">
              <Select value="equal to" />
            </Field>
            <Field label="path" type="Aa">
              <Area value="SKU Part Number" />
            </Field>
            <Field label="comparison" required type="Aa">
              <Pill field badge="table" text="Microsoft License..." />
            </Field>
          </Inputs>
          <Outputs>
            <Nodes
              tone="orange"
              items={[{ text: 'item', kids: ['Applies To', 'Id', 'Name', 'SKU Id', 'SKU Part Number'] }, 'index']}
            />
          </Outputs>
        </Card>
        <Plus />

        <Card emblem="branch" provider="Branching" title="Continue If">
          <Inputs>
            <Field label="value a" type="object">
              <Pill field badge="list" tone="orange" text="item" />
            </Field>
            <Field label="comparison">
              <Select value="is not empty" />
            </Field>
            <Field label="value b" type="Aa">
              <Area />
            </Field>
            <SectionTitle $spaced>otherwise</SectionTitle>
            <Field label="message" type="Aa">
              <Area />
            </Field>
          </Inputs>
          <Outputs>
            <Nodes tone="green" items={['message']} />
          </Outputs>
        </Card>
        <Plus />

        <Card emblem="office" provider="office365admin" title={'Assign License to\nUser'} connection="office">
          <Inputs>
            <SectionTitle $spaced>User</SectionTitle>
            <Field label="Id or Username" required type="Aa">
              <Pill field badge="office" text="Id" />
            </Field>
            <SectionTitle $spaced>License</SectionTitle>
            <Field label="SKU Id" required type="Aa">
              <Pill field badge="list" tone="orange" text="SKU Id" />
            </Field>
            <Field label="Disabled Plans" type="list">
              <AddItemBox>+ click to add item</AddItemBox>
            </Field>
          </Inputs>
          <Outputs $titled>
            <SectionTitle>User</SectionTitle>
            <Nodes
              items={[
                'About Me',
                'Account Enabled',
                'Age Group',
                { text: 'Assigned Licenses', list: true, kids: [] },
                { text: 'Assigned Plans', list: true, kids: [] },
              ]}
            />
          </Outputs>
        </Card>
        <Plus />

        <Card emblem="quote" provider="Text" title="Compose" width={428}>
          <ComposeText $height={235.6} $top={24.2}>
            <ComposeLine>
              {'The Office 365 licenses for  '}
              <Chip>First name</Chip>
              <Chip>Last name</Chip>
              {' ('}
            </ComposeLine>
            <ComposeLine>
              <Chip>Primary email</Chip>
              {')  have been added.'}
            </ComposeLine>
            <ComposeLine>{'<br/><br/>'}</ComposeLine>
            <ComposeLine>The Office 365 Account for this user has been enabled.</ComposeLine>
            <ComposeLine>{'<br/><br/>'}</ComposeLine>
            <ComposeLine>The licenses added are:</ComposeLine>
            <ComposeLine>{'<br/>'}</ComposeLine>
            <ComposeLine>
              <Chip>Name</Chip>
            </ComposeLine>
          </ComposeText>
          <Outputs>
            <Nodes tone="lime" items={['output']} />
          </Outputs>
        </Card>
        <Plus />

        <Card emblem="quote" provider="Text" title="Compose" width={428}>
          <ComposeText $height={131.4} $top={25.8}>
            <ComposeLine $tight>
              {'The Office 365 licenses for  '}
              <Chip>First name</Chip>
              <Chip>Last name</Chip>
              {'('}
            </ComposeLine>
            <ComposeLine $tight>
              <Chip>Primary email</Chip>
              {') have been added.'}
            </ComposeLine>
          </ComposeText>
          <Outputs>
            <Nodes tone="lime" items={['output']} />
          </Outputs>
        </Card>
        <Plus />

        <Card emblem="branch" provider="Branching" title="If/Else" width={474.4} play={false} branch>
          <ConditionRow>
            <Condition>
              <ConditionLabel>Condition</ConditionLabel>
              <span>Manager is not empty ""</span>
              <FaPencilAlt size={9} color={colors.icon} />
            </Condition>
            <CreateOutputs>
              <FaPlusCircle size={11.5} color="#8cc541" />
              Create outputs
            </CreateOutputs>
          </ConditionRow>
          <TrueLane>
            <Plus />
            <Card emblem="bulb" provider="Flow Control" title="Call Flow">
              <Inputs>
                <Heading $gap={0.8}>Run this Flow</Heading>
                <Field label="flo" type="object">
                  <FlowLink>
                    <FlowStripes />
                    <FlowName>
                      [UTIL] Send Manager ...
                      <FlowOpen>
                        <FiExternalLink size={17} />
                      </FlowOpen>
                    </FlowName>
                  </FlowLink>
                </Field>
                <Heading $gap={9.5}>With these inputs</Heading>
                <Field label="manager" type="Aa">
                  <Pill field badge="okta" text="Manager" />
                </Field>
                <Field label="managerId" type="Aa">
                  <Area />
                </Field>
                <Field label="emailSubject" type="Aa">
                  <Pill field badge="quote" tone="lime" text="output" />
                </Field>
                <Field label="emailBody" type="Aa">
                  <Pill field badge="quote" tone="lime" text="output" />
                </Field>
              </Inputs>
              <Outputs>
                <PillSlot $gap={4.4}>
                  <Pill ghost tone="green" text="Click or drag to create" />
                </PillSlot>
              </Outputs>
            </Card>
            <Plus />
          </TrueLane>
          <FalseLane>
            <Plus />
            <LaneTitle>Run when FALSE</LaneTitle>
          </FalseLane>
        </Card>

        <AddColumn>
          <DropZone>
            <DropTitle>And then do this</DropTitle>
            <BlueButton>Add app action</BlueButton>
            <Or>- or -</Or>
            <BlueButton>Add function</BlueButton>
            <HelpLine>
              <FaQuestionCircle size={13} />
              What is an app action or function?
            </HelpLine>
          </DropZone>
          <BlueButton>Add note</BlueButton>
        </AddColumn>
      </Board>
    </>
  );
}
